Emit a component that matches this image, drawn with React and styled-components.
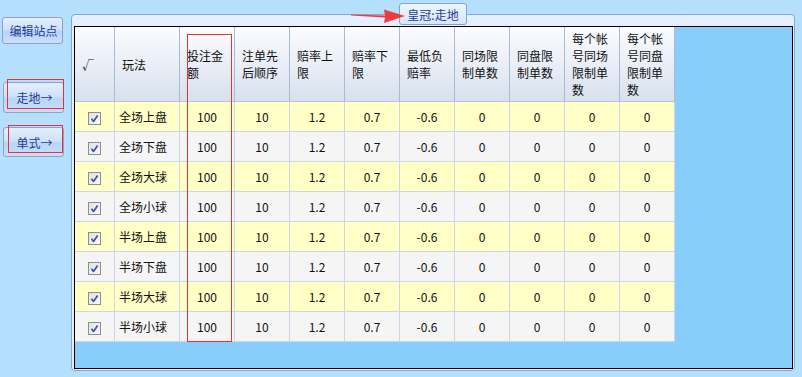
import React from 'react';
import styled, { createGlobalStyle } from 'styled-components';

const GlobalStyle = createGlobalStyle`
  html, body {
    margin: 0;
    padding: 0;
    background: #b4e0fe;
  }
  body {
    font-family: "Noto Sans CJK SC", "Noto Sans", sans-serif;
    font-size: 12px;
    color: #000;
  }
`;

const plays = ['全场上盘', '全场下盘', '全场大球', '全场小球', '半场上盘', '半场下盘', '半场大球', '半场小球'];

const headers = [
  '√',
  '玩法',
  '投注金额',
  '注单先后顺序',
  '赔率上限',
  '赔率下限',
  '最低负赔率',
  '同场限制单数',
  '同盘限制单数',
  '每个帐号同场限制单数',
  '每个帐号同盘限制单数',
];

const values = ['100', '10', '1.2', '0.7', '-0.6', '0', '0', '0', '0'];

const Check = () => (
  <CheckBox>
    <svg width="9" height="9" viewBox="0 0 9 9">
      <path d="M1.4 4.8 L3.5 7.4 L7.6 1.4" fill="none" stroke="#3b56a8" strokeWidth="1.7" strokeLinejoin="round" />
    </svg>
  </CheckBox>
);

const App = () => (
  <>
    <GlobalStyle />
    <Page>
      <SideBar>
        <SideButton top={17} tall={27}>编辑站点</SideButton>
        <SideButton top={38} tall={31}>
          走地→
          <Highlight left={3} top={-4} w={57} h={30} />
        </SideButton>
        <SideButton top={14} tall={30}>
          单式→
          <Highlight left={4} top={-3} w={55} h={28} />
        </SideButton>
      </SideBar>

      <GroupBox>
        <Arrow width="58" height="18" viewBox="0 0 58 18">
          <polygon points="0,7.6 34,8.6 33,2.5 54,9 33,16 34,10.4 0,8.6" fill="#f23a3a" />
        </Arrow>
        <Tab>皇冠:走地</Tab>
        <GridArea>
          <Table>
            <colgroup>
              <col style={{ width: 40 }} />
              <col style={{ width: 65 }} />
              {values.map((_, i) => (
                <col key={i} style={{ width: 55 }} />
              ))}
            </colgroup>
            <thead>
              <tr>
                {headers.map((h, i) => (
                  <HeadCell key={i}>{h}</HeadCell>
                ))}
              </tr>
            </thead>
            <tbody>
              {plays.map((p, r) => (
                <Row key={p} odd={r % 2 === 0}>
                  <Cell>
                    <Check />
                  </Cell>
                  <NameCell>{p}</NameCell>
                  {values.map((v, i) => (
                    <Cell key={i}>{v}</Cell>
                  ))}
                </Row>
              ))}
            </tbody>
          </Table>
          <ColumnMark />
        </GridArea>
      </GroupBox>
    </Page>
  </>
);

export default App;

const Page = styled.div`
  display: flex;
  align-items: flex-start;
  gap: 7px;
  padding-left: 2px;
  height: 377px;
  box-sizing: border-box;
`;

const SideBar = styled.div`
  display: flex;
  flex-direction: column;
  width: 62px;
`;

const SideButton = styled.div`
  position: relative;
  margin-top: ${(p) => p.top}px;
  height: ${(p) => p.tall}px;
  width: 61px;
  box-sizing: border-box;
  border: 1px solid #8aa2cc;
  border-radius: 3px;
  background: linear-gradient(#e4eefc 0%, #cfe2fa 45%, #b9d5f8 55%, #c9defa 100%);
  color: #1f3f92;
  font-size: 12px;
  display: flex;
  align-items: center;
  justify-content: center;
  padding-left: 2px;
  margin-left: ${(p) => (p.top === 17 ? 0 : 1)}px;
`;

const Highlight = styled.span`
  position: absolute;
  left: ${(p) => p.left}px;
  top: ${(p) => p.top}px;
  width: ${(p) => p.w}px;
  height: ${(p) => p.h}px;
  box-sizing: border-box;
  border: 1px solid #f03030;
  pointer-events: none;
`;

const GroupBox = styled.div`
  position: relative;
  margin-top: 14px;
  width: 724px;
  height: 357px;
  box-sizing: border-box;
  border: 1px solid #86a8d8;
  border-radius: 4px;
  background: #e4eefc;
  padding: 11px 1px 1px 2px;
`;

const Tab = styled.div`
  position: absolute;
  left: 327px;
  top: -12px;
  width: 68px;
  height: 22px;
  box-sizing: border-box;
  border: 1px solid #7ea4d8;
  border-radius: 3px;
  background: linear-gradient(#eef4fd, #d8e6fa);
  color: #1f3f92;
  font-size: 12px;
  display: flex;
  align-items: center;
  justify-content: center;
  z-index: 1;
`;

const Arrow = styled.svg`
  position: absolute;
  left: 279px;
  top: -8px;
  z-index: 2;
`;

const GridArea = styled.div`
  position: relative;
  width: 719px;
  height: 343px;
  box-sizing: border-box;
  border: 1px solid #000;
  background: #87cefa;
`;

const Table = styled.table`
  table-layout: fixed;
  width: 600px;
  border-collapse: separate;
  border-spacing: 0;
`;

const HeadCell = styled.th`
  box-sizing: border-box;
  height: 75px;
  padding: 0 2px 0 7px;
  text-align: left;
  vertical-align: middle;
  font-weight: normal;
  font-size: 12px;
  line-height: 17px;
  color: #111;
  background: linear-gradient(#fbfcfe, #d8e0ee);
  border-right: 1px solid #a9bad3;
  border-bottom: 1px solid #b6c4da;
  word-break: break-all;
`;

const Row = styled.tr`
  background: ${(p) => (p.odd ? '#ffffc6' : '#f5f5f6')};
`;

const Cell = styled.td`
  box-sizing: border-box;
  height: 30px;
  padding: 0;
  text-align: center;
  vertical-align: middle;
  font-size: 12px;
  color: #111;
  border-right: 1px solid #cbd7e8;
  border-bottom: 1px solid #cbd7e8;
`;

const NameCell = styled(Cell)`
  text-align: left;
  padding-left: 4px;
`;

const CheckBox = styled.span`
  display: inline-flex;
  align-items: center;
  justify-content: center;
  width: 13px;
  height: 13px;
  box-sizing: border-box;
  border: 1px solid #8e8e8e;
  background: linear-gradient(135deg, #e2e2e2, #f8f8f8);
  vertical-align: middle;
`;

const ColumnMark = styled.span`
  position: absolute;
  left: 112px;
  top: 7px;
  width: 45px;
  height: 308px;
  box-sizing: border-box;
  border: 1px solid #f03030;
  pointer-events: none;
`;
